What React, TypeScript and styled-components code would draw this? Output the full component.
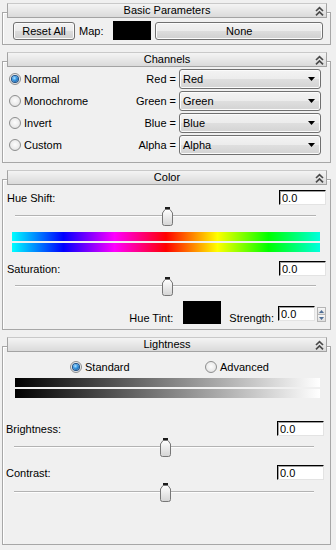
import { Fragment } from "react";
import styled, { createGlobalStyle } from "styled-components";

const GlobalStyle = createGlobalStyle`
  * {
    box-sizing: border-box;
  }
  body {
    margin: 0;
    background: #f0f0f0;
    font-family: "Liberation Sans", Arial, sans-serif;
    font-size: 11px;
    color: #000;
  }
`;

const Panel = styled.div`
  display: flex;
  flex-direction: column;
  gap: 7px;
  width: 336px;
  height: 550px;
  padding: 3px 0 5px 2px;
  overflow: hidden;
`;

const Rollout = styled.section<{ $grow?: boolean }>`
  display: flex;
  flex-direction: column;
  width: 329px;
  flex: ${(p) => (p.$grow ? "1" : "none")};
`;

const RolloutHeader = styled.div`
  position: relative;
  z-index: 1;
  display: flex;
  align-items: center;
  height: 15px;
  margin: 0 4px 0 5px;
  border: 1px solid #a3a3a3;
  border-top-color: #c9c9c9;
  background: linear-gradient(#f4f4f4, #dadada);
`;

const RolloutTitle = styled.span`
  flex: 1;
  padding-left: 11px;
  text-align: center;
  line-height: 13px;
`;

const CollapseIcon = styled.svg`
  margin-right: 2px;
  flex: none;
`;

const Frame = styled.div<{ $pad: string }>`
  flex: 1;
  display: flex;
  flex-direction: column;
  margin-top: -6px;
  padding: ${(p) => p.$pad};
  border: 1px solid #a7a7a7;
  box-shadow: inset 1px 1px 0 #fff;
`;

const ButtonRow = styled.div`
  display: flex;
  align-items: center;
  gap: 4px;
`;

const Button = styled.div<{ $width?: number }>`
  display: flex;
  align-items: center;
  justify-content: center;
  height: 18px;
  width: ${(p) => (p.$width ? `${p.$width}px` : "auto")};
  flex: ${(p) => (p.$width ? "none" : "1")};
  border: 1px solid #707070;
  border-radius: 3px;
  background: linear-gradient(#f2f2f2 0%, #ebebeb 50%, #dddddd 50%, #cfcfcf 100%);
  box-shadow: inset 0 0 0 1px #fbfbfb;
`;

const Label = styled.span<{ $right?: boolean; $ml?: number }>`
  white-space: nowrap;
  margin-left: ${(p) => p.$ml ?? 0}px;
  text-align: ${(p) => (p.$right ? "right" : "left")};
`;

const Swatch = styled.div<{ $w: number; $h: number; $ml?: number }>`
  width: ${(p) => p.$w}px;
  height: ${(p) => p.$h}px;
  margin-left: ${(p) => p.$ml ?? 0}px;
  background: #000;
  flex: none;
`;

const ChannelGrid = styled.div`
  display: grid;
  grid-template-columns: 1fr auto 142px;
  grid-auto-rows: 20px;
  row-gap: 2px;
  column-gap: 3px;
  align-items: center;
`;

const RadioOption = styled.label`
  display: inline-flex;
  align-items: center;
  gap: 3px;
  white-space: nowrap;
`;

const RadioMark = styled.span<{ $checked?: boolean }>`
  display: inline-flex;
  align-items: center;
  justify-content: center;
  width: 12px;
  height: 12px;
  border-radius: 50%;
  border: 1px solid #8e8f8f;
  background: radial-gradient(circle at 50% 45%, #fdfdfd 0%, #ececec 55%, #d2d2d2 100%);
  flex: none;

  &::after {
    content: "";
    display: ${(p) => (p.$checked ? "block" : "none")};
    width: 6px;
    height: 6px;
    border-radius: 50%;
    background: radial-gradient(circle at 40% 35%, #b5e4ff 0%, #3a9be6 40%, #0b4586 100%);
    box-shadow: 0 0 0 1px #1d4f86;
  }
`;

const SelectBox = styled.div`
  display: flex;
  align-items: center;
  justify-content: space-between;
  height: 20px;
  padding: 0 5px 0 3px;
  border: 1px solid #707070;
  border-radius: 3px;
  background: linear-gradient(#f3f3f3 0%, #ececec 50%, #dfdfdf 50%, #d3d3d3 100%);
  box-shadow: inset 0 0 0 1px #fbfbfb;
`;

const FieldRow = styled.div<{ $top?: number }>`
  display: flex;
  align-items: center;
  justify-content: space-between;
  height: 15px;
  margin-top: ${(p) => p.$top ?? 0}px;
`;

const NumberInput = styled.input<{ $width?: number; $mb?: number; $ml?: number }>`
  width: ${(p) => p.$width ?? 47}px;
  height: 15px;
  margin: 0 0 ${(p) => p.$mb ?? 0}px ${(p) => p.$ml ?? 0}px;
  padding: 0 2px;
  border: 1px solid #e3e3e3;
  border-top-color: #000;
  border-left-color: #000;
  box-shadow: inset 1px 1px 0 #a0a0a0;
  background: #fff;
  font: inherit;
  color: #000;
  line-height: 13px;
  outline: none;
  flex: none;
`;

const Slider = styled.div<{ $top?: number }>`
  display: flex;
  align-items: flex-start;
  height: 19px;
  margin: ${(p) => p.$top ?? 0}px 10px 0 8px;
  background: linear-gradient(
    to bottom,
    transparent 8px,
    #b3b3b3 8px,
    #b3b3b3 9px,
    #fdfdfd 9px,
    #fdfdfd 10px,
    transparent 10px
  );
`;

const ThumbSvg = styled.svg`
  flex: none;
  display: block;
`;

const GradientBars = styled.div<{ $top: number; $left: number; $right: number }>`
  display: flex;
  flex-direction: column;
  gap: 2px;
  margin: ${(p) => p.$top}px ${(p) => p.$right}px 0 ${(p) => p.$left}px;
`;

const GradientBar = styled.div<{ $fill: string }>`
  height: 9px;
  background: ${(p) => p.$fill};
`;

const TintRow = styled.div`
  display: flex;
  align-items: flex-end;
  justify-content: flex-end;
  height: 23px;
  margin-top: 5px;
`;

const Spinner = styled.div`
  display: flex;
  flex-direction: column;
  width: 9px;
  height: 15px;
  margin: 0 0 2px 2px;
  flex: none;
`;

const SpinButton = styled.div`
  flex: 1;
  display: flex;
  align-items: center;
  justify-content: center;
  border: 1px solid #b5b5b5;
  background: linear-gradient(#f7f7f7, #dedede);

  & + & {
    border-top: none;
  }
`;

const ModeRow = styled.div`
  display: grid;
  grid-template-columns: 135px auto;
  align-items: center;
  height: 13px;
  padding-left: 64px;
`;

const RAINBOW =
  "linear-gradient(to right, #00ffff 0%, #0000ff 16.7%, #ff00ff 33.3%, #ff0000 50%, #ffff00 66.7%, #00ff00 83.3%, #00ffdf 100%)";
const GRAYS = "linear-gradient(to right, #000000 0%, #ffffff 100%)";

function Collapse() {
  return (
    <CollapseIcon width="9" height="10" viewBox="0 0 9 10">
      <path
        d="M1 5 L4.5 1.6 L8 5 M1 9.4 L4.5 6 L8 9.4"
        fill="none"
        stroke="#4a4a4a"
        strokeWidth="1.7"
      />
    </CollapseIcon>
  );
}

function Header({ title }: { title: string }) {
  return (
    <RolloutHeader>
      <RolloutTitle>{title}</RolloutTitle>
      <Collapse />
    </RolloutHeader>
  );
}

function Thumb({ value }: { value: number }) {
  return (
    <ThumbSvg
      width="11"
      height="19"
      viewBox="0 0 11 19"
      style={{ marginLeft: `calc(${value}% - 4px)` }}
    >
      <defs>
        <linearGradient id="thumbFill" x1="0" y1="0" x2="0" y2="1">
          <stop offset="0" stopColor="#ffffff" />
          <stop offset="1" stopColor="#d4d4d4" />
        </linearGradient>
      </defs>
      <rect x="3" y="0" width="5" height="2" fill="#1c1c1c" />
      <path
        d="M3 2.5 H8 L10.5 6 V16.5 Q10.5 18.5 8.5 18.5 H2.5 Q0.5 18.5 0.5 16.5 V6 Z"
        fill="url(#thumbFill)"
        stroke="#777"
      />
    </ThumbSvg>
  );
}

function SelectArrow() {
  return (
    <svg width="7" height="4" viewBox="0 0 7 4">
      <path d="M0 0 H7 L3.5 4 Z" fill="#000" />
    </svg>
  );
}

const channels = [
  { mode: "Normal", label: "Red =", value: "Red", checked: true },
  { mode: "Monochrome", label: "Green =", value: "Green" },
  { mode: "Invert", label: "Blue =", value: "Blue" },
  { mode: "Custom", label: "Alpha =", value: "Alpha" },
];

export default function App() {
  return (
    <>
      <GlobalStyle />
      <Panel>
        <Rollout>
          <Header title="Basic Parameters" />
          <Frame $pad="8px 7px 4px 10px">
            <ButtonRow>
              <Button $width={62}>Reset All</Button>
              <Label>Map:</Label>
              <Swatch $w={38} $h={19} $ml={6} />
              <Button>None</Button>
            </ButtonRow>
          </Frame>
        </Rollout>

        <Rollout>
          <Header title="Channels" />
          <Frame $pad="7px 9px 7px 6px">
            <ChannelGrid>
              {channels.map((c) => (
                <Fragment key={c.mode}>
                  <RadioOption>
                    <RadioMark $checked={c.checked} />
                    {c.mode}
                  </RadioOption>
                  <Label $right>{c.label}</Label>
                  <SelectBox>
                    {c.value}
                    <SelectArrow />
                  </SelectBox>
                </Fragment>
              ))}
            </ChannelGrid>
          </Frame>
        </Rollout>

        <Rollout>
          <Header title="Color" />
          <Frame $pad="10px 4px 5px 4px">
            <FieldRow>
              <Label>Hue Shift:</Label>
              <NumberInput readOnly value="0.0" />
            </FieldRow>
            <Slider $top={2}>
              <Thumb value={50} />
            </Slider>
            <GradientBars $top={6} $left={5} $right={6}>
              <GradientBar $fill={RAINBOW} />
              <GradientBar $fill={RAINBOW} />
            </GradientBars>
            <FieldRow $top={9}>
              <Label>Saturation:</Label>
              <NumberInput readOnly value="0.0" />
            </FieldRow>
            <Slider $top={1}>
              <Thumb value={50} />
            </Slider>
            <TintRow>
              <Label>Hue Tint:</Label>
              <Swatch $w={38} $h={23} $ml={10} />
              <Label $ml={8}>Strength:</Label>
              <NumberInput readOnly value="0.0" $width={37} $mb={3} $ml={4} />
              <Spinner>
                <SpinButton>
                  <svg width="5" height="3" viewBox="0 0 5 3">
                    <path d="M0 3 H5 L2.5 0 Z" fill="#4d6d96" />
                  </svg>
                </SpinButton>
                <SpinButton>
                  <svg width="5" height="3" viewBox="0 0 5 3">
                    <path d="M0 0 H5 L2.5 3 Z" fill="#4d6d96" />
                  </svg>
                </SpinButton>
              </Spinner>
            </TintRow>
          </Frame>
        </Rollout>

        <Rollout $grow>
          <Header title="Lightness" />
          <Frame $pad="13px 6px 0 3px">
            <ModeRow>
              <RadioOption>
                <RadioMark $checked />
                Standard
              </RadioOption>
              <RadioOption>
                <RadioMark />
                Advanced
              </RadioOption>
            </ModeRow>
            <GradientBars $top={5} $left={9} $right={4}>
              <GradientBar $fill={GRAYS} />
              <GradientBar $fill={GRAYS} />
            </GradientBars>
            <FieldRow $top={23}>
              <Label>Brightness:</Label>
              <NumberInput readOnly value="0.0" />
            </FieldRow>
            <Slider $top={2}>
              <Thumb value={50} />
            </Slider>
            <FieldRow $top={8}>
              <Label>Contrast:</Label>
              <NumberInput readOnly value="0.0" />
            </FieldRow>
            <Slider $top={3}>
              <Thumb value={50} />
            </Slider>
          </Frame>
        </Rollout>
      </Panel>
    </>
  );
}
